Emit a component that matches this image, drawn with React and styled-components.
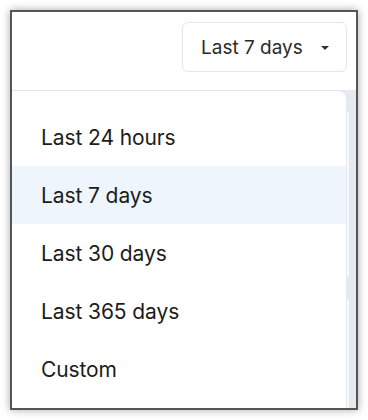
import React, { useState } from "react";
import styled, { createGlobalStyle } from "styled-components";

const GlobalStyle = createGlobalStyle`
  body {
    margin: 0;
    background: #ffffff;
    font-family: Inter, "Noto Sans", sans-serif;
  }
`;

const Page = styled.div`
  padding: 10px;
`;

const Frame = styled.div`
  box-sizing: border-box;
  width: 348px;
  height: 400px;
  border: 2px solid #555555;
  box-shadow: 0 0 8px rgba(0, 0, 0, 0.35);
  background: #ffffff;
  display: flex;
  flex-direction: column;
  overflow: hidden;
`;

const Header = styled.div`
  height: 78px;
  flex-shrink: 0;
  display: flex;
  justify-content: flex-end;
  align-items: flex-start;
  padding: 10px 9px 0 0;
  box-sizing: border-box;
`;

const Trigger = styled.button`
  box-sizing: border-box;
  width: 165px;
  height: 50px;
  border: 1px solid #e4e6ea;
  border-radius: 6px;
  background: #ffffff;
  display: flex;
  align-items: center;
  justify-content: space-between;
  padding: 0 17px 0 18px;
  font-family: Inter, "Noto Sans", sans-serif;
  font-size: 19px;
  color: #2a2a2a;
  cursor: pointer;
`;

const Caret = styled.span`
  width: 0;
  height: 0;
  border-left: 4px solid transparent;
  border-right: 4px solid transparent;
  border-top: 4px solid #333333;
  margin-top: 2px;
`;

const Backdrop = styled.div`
  flex: 1;
  display: flex;
  background: #e5e9f0;
`;

const Menu = styled.ul`
  list-style: none;
  margin: 0;
  width: 334px;
  flex-shrink: 0;
  padding: 17px 0 0;
  background: #ffffff;
  border-top: 1px solid #e3e6eb;
  border-top-right-radius: 8px;
  box-sizing: border-box;
`;

const Item = styled.li`
  height: 58px;
  display: flex;
  align-items: center;
  padding-left: 29px;
  font-size: 21px;
  color: #1c1c1c;
  letter-spacing: -0.1px;
  background: ${p => (p.$active ? "#eff5fd" : "transparent")};
  cursor: pointer;
`;

const Strip = styled.div`
  flex: 1;
  display: flex;
  flex-direction: column;
  padding: 22px 0 0 1px;
  gap: 22px;
`;

const Sliver = styled.div`
  width: 2px;
  height: ${p => p.$h}px;
  background: #f7f9fc;
  border-radius: 2px;
`;

const options = [
  "Last 24 hours",
  "Last 7 days",
  "Last 30 days",
  "Last 365 days",
  "Custom"
];

const App = () => {
  const [selected, setSelected] = useState("Last 7 days");

  return (
    <Page>
      <GlobalStyle />
      <Frame>
        <Header>
          <Trigger>
            {selected}
            <Caret />
          </Trigger>
        </Header>
        <Backdrop>
          <Menu>
            {options.map(option => (
              <Item
                key={option}
                $active={option === selected}
                onClick={() => setSelected(option)}
              >
                {option}
              </Item>
            ))}
          </Menu>
          <Strip>
            <Sliver $h={165} />
            <Sliver $h={120} />
          </Strip>
        </Backdrop>
      </Frame>
    </Page>
  );
};

export default App;
